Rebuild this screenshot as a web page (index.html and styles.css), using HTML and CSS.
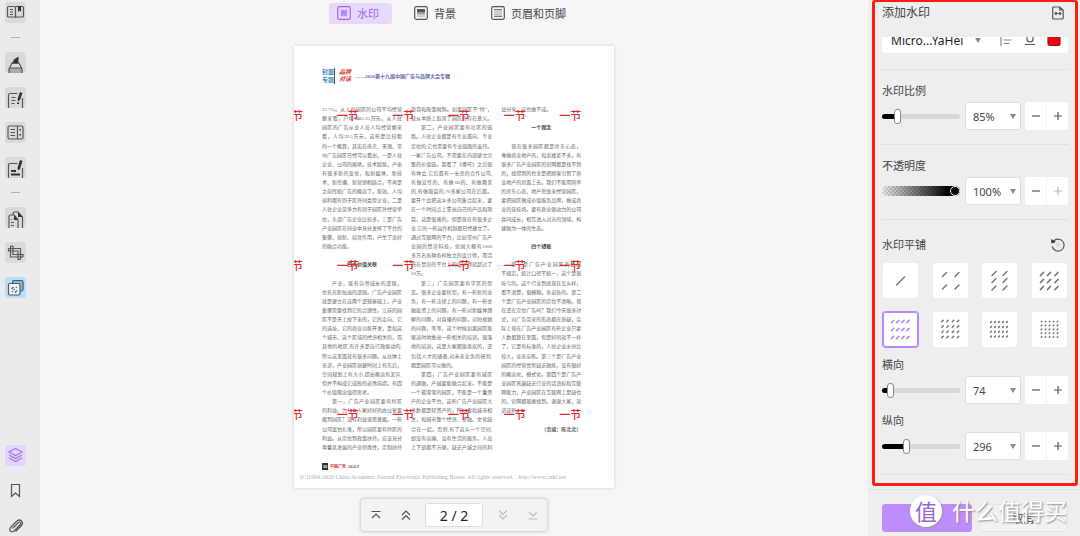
FILE: index.html
```html
<!DOCTYPE html>
<html lang="zh-CN">
<head>
<meta charset="utf-8">
<meta name="viewport" content="width=device-width, initial-scale=1">
<title>添加水印</title>
<link rel="stylesheet" href="styles.css">
</head>
<body>
<div class="app">
  <nav class="rail" aria-label="工具栏">
    <button class="tool" aria-label="阅读"><svg viewBox="0 0 21 21"><path d="M3.500 4.500h6q1 0 1 1v10.500q0-1-1-1h-6q-1 0-1-1v-8.500q0-1 1-1zM10.500 5.500q0-1 1-1h6q1 0 1 1v8.500q0 1-1 1h-6q-1 0-1 1"/><path d="M5 7.500h3M5 10h3M5 12.500h3"/><path class="solid" d="M13 4h3v6l-1.500-1.500L13 10z"/></svg></button>
    <hr class="dash">
    <button class="tool" aria-label="高亮"><svg viewBox="0 0 21 21"><path class="shade" d="M4 16h13v5H4z"/><path d="M4 21v-4l3-6h7l3 6v4M4 16h13"/><path class="solid" d="M7 11.500l2-4 4.500-3v7z"/></svg></button>
    <button class="tool" aria-label="编辑"><svg viewBox="0 0 21 21"><path d="M12.500 6.500H5q-1.500 0-1.500 1.500V21M17.500 11v10"/><path d="M6.500 10.500h4M6.500 13.500h4M6.500 16.500h3"/><path class="solid" d="M15 5l2.500 1-2.500 7-2 1.500-.5-2.500zM12 15.500h2v1.500h-2z"/></svg></button>
    <button class="tool" aria-label="表单"><svg viewBox="0 0 21 21"><rect x="3" y="4" width="15" height="13" rx="1.500"/><path d="M12.500 4v13M5.500 7.500h4.500M5.500 10.500h4.500M5.500 13.500h4.500"/><path class="solid" d="M14.500 7h1.500v1.500h-1.500zM14.500 12h1.500v1.500h-1.500z"/></svg></button>
    <button class="tool" aria-label="密文"><svg viewBox="0 0 21 21"><path d="M12.500 6.500H5q-1.500 0-1.500 1.500V21M17.500 11v10"/><path class="solid" d="M6 13h5v2H6zM6 16.500h9v2H6zM15 3l2.500 1-2.500 8-2 1.500-.5-2.500z"/></svg></button>
    <hr class="dash">
    <button class="tool" aria-label="页面"><svg viewBox="0 0 21 21"><path d="M4 21V9.500Q4 8 5.500 8H9l4 4.500V21M8 8V6.500Q8 5 9.500 5H13l4.500 5v11"/><path class="solid" d="M9 8l4 5H9zM13 5l4.500 5H13z"/><path d="M6 12.500h1M6 15.500h3M6 18.500h3"/></svg></button>
    <button class="tool" aria-label="裁剪"><svg viewBox="0 0 21 21"><path d="M5.500 4v11h12.500M3.500 6.500h12V17.500M8 4v8.500h10V15M3.500 6.500V9h9.500v8.500h2.500M5.500 4H8"/></svg></button>
    <button class="tool tool--on" aria-label="水印"><svg viewBox="0 0 21 21"><rect class="sky" x="7.500" y="3.500" width="10.500" height="10.500" rx="1.500"/><rect class="pale" x="3.500" y="6.500" width="11.500" height="11.500" rx="1.500"/><path d="M6.500 12l2-2M6.800 14.800l1-1M8.700 13l1-1M10 15.500l2-2M10.800 10.800l1-1"/></svg></button>
    <div class="rail__end">
      <button class="tool tool--layers" aria-label="图层"><svg viewBox="0 0 21 21"><path d="M10.500 3.500l6.500 3.500-6.500 3.500L4 7zM4 10l6.500 3.500L17 10M4 13l6.500 3.500L17 13"/></svg></button>
      <button class="tool tool--plain" aria-label="书签"><svg viewBox="0 0 21 21"><path d="M6.500 4.500h8V16.500l-4-3.500-4 3.500z"/></svg></button>
      <button class="tool tool--plain" aria-label="附件"><svg viewBox="0 0 21 21"><path d="M7.500 13.500l6-6q1.200-1 2 0t0 2l-6.500 6.500q-2 1.500-3.500 0t0-3.500L12 6q2.500-2 4.500 0t0 4.500l-6 6"/></svg></button>
    </div>
  </nav>

  <main class="stage">
    <div class="tabs">
      <button class="tab tab--on"><svg viewBox="0 0 14 14"><rect x=".7" y=".7" width="12.600" height="12.600" rx="1.500"/><path d="M4 5l1-1M4 7.500L7.500 4M4 10l6-6M6.500 10L10 6.500M9 10l1-1"/></svg>水印</button>
      <button class="tab"><svg viewBox="0 0 14 14"><rect x=".7" y=".7" width="12.600" height="12.600" rx="1.500"/><path class="fill-dark" d="M3 3h8v3H3z"/><path class="fill-mid" d="M3 6h8v2.500H3z"/><path class="fill-light" d="M3 8.500h8V11H3z"/></svg>背景</button>
      <button class="tab"><svg viewBox="0 0 14 14"><rect x=".7" y=".7" width="12.600" height="12.600" rx="1.500"/><path class="fill-light" d="M3 4h8v6H3z"/><path class="thin" d="M3 3.500h8M3 10.500h8"/></svg>页眉和页脚</button>
    </div>

    <article class="paper">
      <header class="masthead">
        <div class="masthead__topic">封面<br>专题</div>
        <div class="masthead__brand">品牌<br>对话</div>
        <div class="masthead__title">——2020第十九届中国广告与品牌大会专辑</div>
      </header>
      <div class="columns">
        <div class="col">
          <p>21.7%。从人驻园区的公司平均经营</p><p>额来看，户均1481.25万元，从人驻</p><p>园区的广告从业人员人均经营额来</p><p>看，人均39.5万元，这些是比较粗</p><p>的一个概算，其实在南京、无锡、常</p><p>州广告园区已经可以看出，一是人驻</p><p>企业、公司的属地，技术赋能，产出</p><p>有很多新的变化，和新媒体、新技</p><p>术、新传播、新营销相结合，不再是</p><p>之前传统广告的概念了，能效、人均</p><p>创利都有别于区外同类型企业，二是</p><p>人驻企业竞争力有别于园区外经营单</p><p>位，头部广告企业比较多，三是广告</p><p>产业园区在同业中充分发挥了平台的</p><p>集聚、创新、培育作用，产生了良好</p><p class="last">的融合功能。</p>
          <h3>四大价值关联</h3>
          <p class="indent">产业，既有自然成长的逻辑，</p><p>也有光影加速的逻辑。广告产业园区</p><p>就是建立在这两个逻辑基础上。产业</p><p>集聚需要找到它的合理性。江苏的园</p><p>区不是天上掉下来的，它的走向、它</p><p>的选址、它的商业功能开发，是和这</p><p>个城市、这个区域的经济相关的，而</p><p>其他的地区,有许多是自行政驱动的,</p><p>所以这里面就有很多问题。从总体上</p><p>来讲，产业园区创建时间上有先后，</p><p>空间规划上有大小,提出概念有差异,</p><p>但并不构成它成败的必然前提。有四</p><p class="last">个价值观念值得思考。</p>
          <p class="indent">第一，广告产业园区要有特区</p><p>的利益。为什么人家好好的办公室要</p><p>搬到园区？没有利益谁愿意搬。一些</p><p>公司富怕扎堆，所以园区要有特区的</p><p>利益。从定位到政策扶持，应该充分</p><p>尊重其发展的产业特殊性，定制扶持</p>
        </div>
        <div class="col">
          <p>项目和政策倾斜。如果园区不“特”，</p><p>就从本质上取消了园区的存在意义。</p><p class="indent">第二，产业园区要有社区的链</p><p>路。人驻企业都是有专业面向、专业</p><p>定位的,它也需要有专业链路的支持。</p><p>一家广告公司，不需要在内部建立完</p><p>整的价值链。我看了《哪吒》之后很</p><p>有体会,它后面有一长串的合作公司,</p><p>有做宣传的、有做3D的、有做舞美</p><p>的,有做服装的,70多家公司在后面。</p><p>要开个会把这么多公司集合起来，要</p><p>在一个时间点上拿出自己的产品和项</p><p>目，这是很难的，但是现在有很多企</p><p>业,它的一些运作机制都已经建立了。</p><p>通过互联网的平台，比如常州广告产</p><p>业园的赞奇科技，全国大概有1000</p><p>多万名各种各样独立的设计师，而活</p><p>跃在赞奇的平台上的设计师就超过了</p><p class="last">10万。</p>
          <p class="indent">第三，广告园区要有学区的型</p><p>见。很多企业要转型，有一些新的业</p><p>务，有一些法律上的问题，有一些金</p><p>融投资上的问题，有一些对新媒体理</p><p>解的问题，对直播的问题，对短视频</p><p>的问题，等等，这个时候如果园区能</p><p>够适时地推出一些相关的培训，很落</p><p>地的培训，这是大家都很喜欢的，还</p><p>包括人才的储备,对未来业务的研判,</p><p class="last">都是园区可以做的。</p>
          <p class="indent">第四，广告产业园区要有城区</p><p>的通融，产城要能融合起来。不能是</p><p>一个孤零零的园区，不能是一个重资</p><p>产的企业平台，这些广告产业园区大</p><p>多数都是轻资产的，所以要和城市相</p><p>关，和城市整个经济、金融、文化结</p><p>合在一起。否则,有了这么一个空间,</p><p>却没有氛围、没有生活的服务，人员</p><p>上下班都不方便，缺乏产城之间的利</p>
        </div>
        <div class="col">
          <p class="last">益分享，这也做不成。</p>
          <h3>一个观念</h3>
          <p class="indent">现在很多园区都是房东心态，</p><p>像做商业地产的，和卖楼差不多，有</p><p>很多广告产业园区的官网都是找不到</p><p>的，找得到的也全是把顾客引到了商</p><p>业地产的页面上去。我们不能用简单</p><p>的房东心态、地产思维来经营园区，</p><p>要把园区做成价值服务品牌，做成商</p><p>业的竞技场。要有商业驱动力的公司</p><p>共同成长，相互进入对方的领域，构</p><p class="last">建融为一体的生态。</p>
          <h3>四个短板</h3>
          <p class="indent">第一是广告产业园区的数据</p><p>不规范，统计口径不统一，这个是很</p><p>吃亏的。这个行业到底现在怎么样，</p><p>看不清楚，很模糊，各说各的。第二</p><p>个是广告产业园区的定位不清晰。现</p><p>在还在定位广告吗？我们今天很多讨</p><p>论，对广告带来的形态都在质疑，实</p><p>际上现在广告产业园区有些企业只要</p><p>人数都算在里面，但是好的就不一样</p><p>了，它是有标准的，人驻企业水分比</p><p>较大，业态杂陈。第三个是广告产业</p><p>园区的经营优势缺乏融炼，没有很好</p><p>的概念化、模式化。第四个是广告产</p><p>业园区普遍缺乏行业的话语权和互联</p><p>网能力，产业园区在互联网上是缺位</p><p>的，官网都很难找到。谢谢大家，就</p><p class="last">讲这些。<span class="endmark">■</span></p>
          <p class="credit">（责编：陈北北）</p>
        </div>
      </div>
      <footer class="folio"><b class="folio__no">30</b><b class="folio__name">中国广告</b><b>2020.9</b></footer>
      <div class="rights"><span>(C)1994-2020 China Academic Journal Electronic Publishing House. All rights reserved.</span><a href="#cnki">http://www.cnki.net</a></div>
      <div class="marks" aria-hidden="true">
        <span>一节</span><span>一节</span><span>一节</span><span>一节</span><span>一节</span><span>一节</span>
        <span>一节</span><span>一节</span><span>一节</span><span>一节</span><span>一节</span><span>一节</span>
        <span>一节</span><span>一节</span><span>一节</span><span>一节</span><span>一节</span><span>一节</span>
      </div>
    </article>

    <div class="pager">
      <button class="pager__btn" aria-label="首页"><svg viewBox="0 0 12 12"><path d="M1.500 2.500h9M2 9l4-4 4 4"/></svg></button>
      <button class="pager__btn" aria-label="上一页"><svg viewBox="0 0 12 12"><path d="M2 6l4-4 4 4M2 10.500l4-4 4 4"/></svg></button>
      <input class="pager__field" aria-label="页码" value="2 / 2">
      <button class="pager__btn" aria-label="下一页" disabled><svg viewBox="0 0 12 12"><path d="M2 1.500l4 4 4-4M2 6l4 4 4-4"/></svg></button>
      <button class="pager__btn" aria-label="末页" disabled><svg viewBox="0 0 12 12"><path d="M1.500 10h9M2 3l4 4 4-4"/></svg></button>
    </div>
  </main>

  <aside class="panel">
    <section class="frame">
      <header class="frame__head"><h2>添加水印</h2><button class="ghost" aria-label="页面范围"><svg viewBox="0 0 14 14"><path d="M1.700 2q0-1 1-1h6l3.500 3v8q0 1-1 1H2.700q-1 0-1-1zM8.700 1v3h3M4 7.500h6M5.500 6L4 7.500 5.500 9M8.500 6L10 7.500 8.500 9"/></svg></button></header>
      <div class="clip">
        <div class="font-row">
          <span class="font-row__pick"><select aria-label="字体"><option>Micro...YaHei</option></select><svg class="caret" viewBox="0 0 6 5"><path d="M0 0h6L3 5z"/></svg></span>
          <button class="ghost" aria-label="对齐"><svg viewBox="0 0 14 14"><path class="soft" d="M2 1v12M4.500 3.500h5M4.500 7h8M4.500 10.500h6"/></svg></button>
          <button class="ghost" aria-label="下划线"><svg viewBox="0 0 14 14"><path d="M4 1v5q0 3 3 3t3-3V1M2 11.500h10"/></svg></button>
          <button class="ghost" aria-label="颜色"><svg viewBox="0 0 14 14"><rect class="red" x="1" y="1.500" width="12" height="11" rx="2"/></svg></button>
        </div>
      </div>
      <hr class="rule rule--first">
      <label class="label" for="scale">水印比例</label>
      <div class="control">
        <input id="scale" type="range" min="0" max="100" value="17" style="--at:20%">
        <span class="value"><select aria-label="比例值"><option>85%</option></select><svg class="caret" viewBox="0 0 6 5"><path d="M0 0h6L3 5z"/></svg></span>
        <span class="stepper"><button aria-label="减小比例"><svg viewBox="0 0 10 10"><path d="M1 5h8"/></svg></button><button aria-label="增大比例"><svg viewBox="0 0 10 10"><path d="M1 5h8M5 1v8"/></svg></button></span>
      </div>
      <hr class="rule">
      <label class="label" for="opacity">不透明度</label>
      <div class="control">
        <input id="opacity" class="fade" type="range" min="0" max="100" value="100">
        <span class="value"><select aria-label="不透明度值"><option>100%</option></select><svg class="caret" viewBox="0 0 6 5"><path d="M0 0h6L3 5z"/></svg></span>
        <span class="stepper"><button aria-label="减小不透明度"><svg viewBox="0 0 10 10"><path d="M1 5h8"/></svg></button><button aria-label="增大不透明度" disabled><svg viewBox="0 0 10 10"><path d="M1 5h8M5 1v8"/></svg></button></span>
      </div>
      <hr class="rule">
      <div class="tile-head"><span class="label">水印平铺</span><button class="ghost" aria-label="重置"><svg viewBox="0 0 14 14"><path d="M2.500 3.200A6 6 0 1 1 1.200 8.500"/><path class="solid" d="M0 1l.5 4.500L5 4z"/><circle class="dot" cx="7.200" cy="7" r="2.400"/></svg></button></div>
      <div class="tiles">
        <button class="tile" aria-label="平铺 1" data-x="17.5" data-y="18" data-size="8"></button>
        <button class="tile" aria-label="平铺 2" data-x="11.5 24" data-y="11.5 24" data-size="4"></button>
        <button class="tile" aria-label="平铺 3" data-x="12 23" data-y="10.5 17.5 25" data-size="4"></button>
        <button class="tile" aria-label="平铺 4" data-x="10 17 24.5" data-y="11 18 25" data-size="3.200"></button>
        <button class="tile tile--on" aria-label="平铺 5" data-x="9.5 14.7 20 25" data-y="9.500 17.500 25.500" data-size="2.400"></button>
        <button class="tile" aria-label="平铺 6" data-x="9.5 14.5 20 25" data-y="9 14.5 19.7 25" data-size="1.500"></button>
        <button class="tile" aria-label="平铺 7" data-x="9 13 17 21 25" data-y="10 15 19.7 24.5" data-size=".8"></button>
        <button class="tile" aria-label="平铺 8" data-x="9.5 13.5 17.5 21.5 25.5" data-y="9.500 13.400 17.300 21.200 25" data-size=".6"></button>
      </div>
      <label class="label" for="gap-x">横向</label>
      <div class="control">
        <input id="gap-x" type="range" min="0" max="100" value="7" style="--at:10%">
        <span class="value"><select aria-label="横向值"><option>74</option></select><svg class="caret" viewBox="0 0 6 5"><path d="M0 0h6L3 5z"/></svg></span>
        <span class="stepper"><button aria-label="减小横向"><svg viewBox="0 0 10 10"><path d="M1 5h8"/></svg></button><button aria-label="增大横向"><svg viewBox="0 0 10 10"><path d="M1 5h8M5 1v8"/></svg></button></span>
      </div>
      <label class="label label--tight" for="gap-y">纵向</label>
      <div class="control">
        <input id="gap-y" type="range" min="0" max="100" value="30" style="--at:31%">
        <span class="value"><select aria-label="纵向值"><option>296</option></select><svg class="caret" viewBox="0 0 6 5"><path d="M0 0h6L3 5z"/></svg></span>
        <span class="stepper"><button aria-label="减小纵向"><svg viewBox="0 0 10 10"><path d="M1 5h8"/></svg></button><button aria-label="增大纵向"><svg viewBox="0 0 10 10"><path d="M1 5h8M5 1v8"/></svg></button></span>
      </div>
      <hr class="rule rule--last">
    </section>
    <footer class="actions">
      <button class="action action--main" aria-label="应用"></button>
      <button class="action">取消</button>
      <div class="brand"><span class="brand__seal">值</span><span class="brand__name">什么值得买</span></div>
    </footer>
  </aside>
</div>
<script src="tiles.js"></script>
</body>
</html>
```

FILE: tiles.js
```js
// Draws the slanted strokes that preview each tiling density.
document.querySelectorAll('.tile').forEach(function (tile) {
  var xs = tile.dataset.x.split(' ').map(Number);
  var ys = tile.dataset.y.split(' ').map(Number);
  var s = Number(tile.dataset.size);
  var d = '';
  ys.forEach(function (y) {
    xs.forEach(function (x) {
      d += 'M' + (x - s / 2) + ' ' + (y + s / 2) + 'l' + s + ' ' + (-s);
    });
  });
  tile.innerHTML = '<svg viewBox="0 0 35 35"><path d="' + d + '"/></svg>';
});
```

FILE: styles.css
```css
* { box-sizing: border-box; }
body, h2, h3, p, hr { margin: 0; }
body {
  font-family: "Noto Sans", "Noto Sans CJK SC", sans-serif;
  font-size: 11px;
  color: #444;
  background: #f6f6f6;
}
button, input, select { font: inherit; color: inherit; margin: 0; padding: 0; border: 0; background: none; }
svg { display: block; fill: none; stroke: #555; stroke-width: 1.2; }
.solid { fill: #333; stroke: none; }

.app { display: flex; min-height: 100vh; }

/* Left tool rail */
.rail {
  flex: none;
  width: 40px;
  padding: 2px 0 2px 5px;
  display: flex;
  flex-direction: column;
  align-items: flex-start;
  gap: 14px;
  background: #ebebeb;
}
.rail__end { margin-top: auto; display: flex; flex-direction: column; gap: 14px; }
.tool { width: 21px; height: 21px; border-radius: 3px; background: #dadada; overflow: hidden; }
.tool--on { background: #b5dffb; }
.tool--layers { background: #e3d5fb; }
.tool--layers svg { stroke: #a672ef; }
.tool--plain { background: none; }
.dash { width: 9px; height: 1px; margin-left: 6px; border: 0; background: #b0b0b0; }
.shade { fill: #aaa; stroke: none; }
.sky { fill: #7cc2ef; }
.pale { fill: #e9f5fd; }

/* Centre stage */
.stage { flex: 1; min-width: 0; display: flex; flex-direction: column; align-items: center; }
.tabs { display: flex; gap: 14px; padding: 3px 0 22px; }
.tab {
  display: flex;
  align-items: center;
  gap: 6px;
  height: 21px;
  padding: 0 13px 2px 8px;
  border-radius: 3px;
  white-space: nowrap;
}
.tab svg { width: 14px; height: 14px; }
.tab--on { background: #e6d9fd; color: #a266f0; }
.tab--on svg { stroke: #a266f0; }
.fill-dark { fill: #555; stroke: none; }
.fill-mid { fill: #999; stroke: none; }
.fill-light { fill: #ccc; stroke: none; }
.thin { stroke: #777; stroke-width: 1; }

/* Document page */
.paper {
  position: relative;
  width: 320px;
  padding: 21px 33px 7px 28px;
  background: #fff;
  box-shadow: 0 0 3px #ccc;
  font-family: "Liberation Serif", "Noto Sans CJK SC", serif;
  font-size: 5px;
  color: #666;
  overflow: hidden;
}
.masthead { display: flex; align-items: center; gap: 4px; height: 17px; font-weight: bold; white-space: nowrap; }
.masthead__topic { font-size: 6px; line-height: 8px; color: #3a8fc0; border-right: 1px solid #555; }
.masthead__brand { font-size: 6px; line-height: 7px; color: #d8342c; font-style: italic; }
.masthead__title { color: #5a6aab; }
.columns { display: grid; grid-template-columns: repeat(3, 1fr); gap: 9px; margin-top: 21px; }
.col { display: grid; grid-template-rows: repeat(38, 1fr); height: 347px; line-height: 9px; }
.col p { white-space: nowrap; text-align: justify; text-align-last: justify; min-height: 0; }
.col .indent { padding-left: 10px; }
.col .last { text-align-last: left; }
.col h3 { grid-row: span 3; align-self: center; font-size: 5px; text-align: center; color: #444; }
.col .credit { grid-row: span 3; align-self: center; text-align-last: right; font-weight: bold; }
.endmark { color: #2c5878; }
.folio { display: flex; gap: 2px; margin-top: 11px; font-size: 4px; line-height: 7px; }
.folio__no { padding: 0 1px; color: #fff; background: #333; }
.folio__name { color: #d8342c; }
.rights {
  display: flex;
  gap: 5px;
  margin: 3px -27px 0 -22px;
  font-size: 6px;
  line-height: 8px;
  white-space: nowrap;
  color: #b0b0b0;
}
.rights a { color: inherit; text-decoration: none; }
.marks {
  position: absolute;
  inset: 61px -1px 66px -13px;
  display: grid;
  grid-template-columns: repeat(6, 1fr);
  align-content: space-between;
  font: 500 11px/16px "Noto Sans CJK SC", sans-serif;
  color: #e8262a;
  pointer-events: none;
}

/* Page navigation */
.pager {
  display: flex;
  align-items: center;
  gap: 9px;
  margin-top: 11px;
  padding: 4px;
  border-radius: 3px;
  background: #f3f3f3;
  box-shadow: 0 0 3px 1px #ccc;
}
.pager__btn { display: grid; place-items: center; width: 21px; height: 23px; }
.pager__btn svg { width: 12px; height: 12px; }
.pager__btn:disabled svg { stroke: #bbb; }
.pager__field {
  width: 58px;
  height: 24px;
  border: 1px solid #ddd;
  border-radius: 3px;
  background: #fff;
  font-size: 14px;
  text-align: center;
  color: #222;
}

/* Right settings panel */
.panel { flex: none; width: 212px; display: flex; flex-direction: column; background: #eee; }
.frame { margin: 0 2px 0 4px; padding: 0 7px 8px; border: 3px solid #ff1c10; border-top-width: 2px; border-radius: 3px; }
.frame__head { display: flex; justify-content: space-between; align-items: center; height: 21px; padding-right: 3px; }
.frame__head h2 { font-size: 12px; font-weight: normal; line-height: 18px; }
.ghost svg { width: 14px; height: 14px; }
.clip { display: flex; align-items: flex-end; height: 16px; margin-top: 14px; border-radius: 0 0 3px 3px; background: #fff; overflow: hidden; }
.font-row { flex: 1; display: flex; align-items: center; gap: 10px; height: 26px; padding: 0 7px 0 9px; }
.font-row__pick { flex: 1; display: flex; align-items: center; font-size: 12px; color: #222; }
.font-row__pick select { width: 84px; }
select { appearance: none; outline: 0; }
.caret { flex: none; width: 6px; height: 5px; fill: #888; stroke: none; }
.soft { stroke: #888; }
.red { fill: #e00b10; stroke: #b60b10; }
.dot { fill: #ddd; stroke: none; }
.rule { height: 1px; border: 0; background: #e1e1e1; margin: 14px 0 12px; }
.rule--first { margin-top: 16px; }
.rule--last { margin-bottom: 0; }
.label { display: block; line-height: 18px; }
.control { display: flex; align-items: center; height: 28px; margin-top: 2px; }
.control input {
  flex: 1;
  min-width: 0;
  height: 18px;
  margin-right: 5px;
  appearance: none;
}
.control input::-webkit-slider-runnable-track {
  height: 5px;
  border-radius: 3px;
  background: linear-gradient(90deg, #000 var(--at), #d8d8d8 var(--at));
}
.control input::-webkit-slider-thumb {
  appearance: none;
  width: 7px;
  height: 15px;
  margin-top: -5px;
  border: 1px solid #888;
  border-radius: 3px;
  background: #fff;
}
.control .fade::-webkit-slider-runnable-track {
  height: 10px;
  border-radius: 5px;
  background: linear-gradient(90deg, transparent, #000 85%), repeating-conic-gradient(#ccc 0 25%, #eee 0 50%) 0 0 / 4px 4px;
}
.control .fade::-webkit-slider-thumb {
  width: 10px;
  height: 10px;
  margin-top: 0;
  border: 1px solid #eee;
  border-radius: 50%;
  background: #000;
}
.value {
  display: flex;
  align-items: center;
  width: 56px;
  height: 28px;
  margin-right: 4px;
  padding: 0 4px 0 7px;
  border: 1px solid #ddd;
  border-radius: 3px;
  background: #fff;
}
.value select { flex: 1; min-width: 0; }
.stepper { display: flex; width: 43px; height: 28px; border-radius: 3px; background: #fff; }
.stepper button { flex: 1; display: grid; place-items: center; }
.stepper button + button { border-left: 1px solid #f2f2f2; }
.stepper svg { width: 10px; height: 10px; }
.stepper button:disabled svg { stroke: #bbb; }
.tile-head { display: flex; align-items: center; justify-content: space-between; margin-top: 16px; padding-right: 3px; }
.tiles { display: grid; grid-template-columns: repeat(4, 35px); justify-content: space-between; gap: 14px 0; margin: 9px 0; padding: 0 1px; }
.tile { height: 35px; border-radius: 3px; background: #fff; }
.tile svg { width: 35px; height: 35px; stroke: #777; stroke-width: 1.5; stroke-linecap: round; }
.tile--on { box-shadow: inset 0 0 0 1px #b98af7, 0 0 0 1px #b98af7; }
.tile--on svg { stroke: #b07bf5; }
.label--tight { margin-top: 8px; }

/* Panel footer */
.actions {
  position: relative;
  flex: 1;
  display: grid;
  grid-template-columns: 1fr 1fr;
  align-items: start;
  gap: 7px;
  margin-top: 3px;
  padding: 14px 12px 6px 14px;
  border-top: 1px solid #e2e2e2;
}
.action { height: 28px; border-radius: 3px; background: #f2f2f2; border: 1px solid #e4e4e4; }
.action--main { background: #bd8dfc; border-color: #bd8dfc; }
.brand { position: absolute; left: 42px; top: 5px; display: flex; align-items: center; gap: 10px; white-space: nowrap; }
.brand__seal {
  display: grid;
  place-items: center;
  width: 32px;
  height: 32px;
  border-radius: 50%;
  background: #fff;
  box-shadow: 1px 1px 2px #999;
  font-size: 22px;
  line-height: 32px;
  color: #9a68d4;
}
.brand__name { font-size: 23px; line-height: 32px; color: #fff; text-shadow: 1px 1px 2px #888; }
```
